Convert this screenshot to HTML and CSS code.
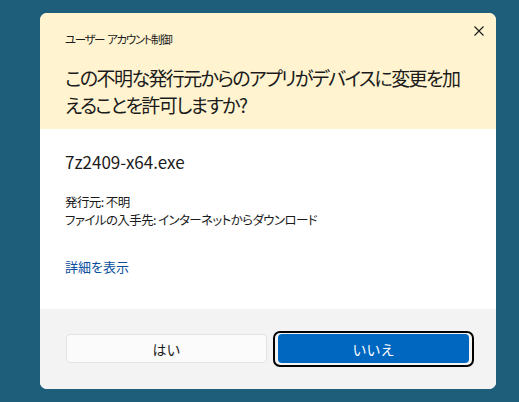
FILE: index.html
```html
<!DOCTYPE html>
<html lang="ja">
<head>
    <meta charset="UTF-8">
    <meta name="viewport" content="width=device-width, initial-scale=1.0">
    <title>ユーザー アカウント制御</title>
    <link rel="stylesheet" href="styles.css">
</head>
<body>

<div class="uac">
    <header class="uac-head">
        <div class="uac-titlebar">
            <span class="uac-caption">ユーザー アカウント制御</span>
            <button class="uac-close" aria-label="閉じる">
                <svg width="10" height="10" viewBox="0 0 10 10">
                    <path d="M0.5 0.5 L9.5 9.5 M9.5 0.5 L0.5 9.5" stroke="#1a1a1a" stroke-width="1.1" fill="none"/>
                </svg>
            </button>
        </div>
        <h1 class="uac-question">この不明な発行元からのアプリがデバイスに変更を加<br>えることを許可しますか?</h1>
    </header>

    <section class="uac-body">
        <p class="uac-file">7z2409-x64.exe</p>
        <p class="uac-info">発行元: 不明<br>ファイルの入手先: インターネットからダウンロード</p>
        <a class="uac-more" href="#">詳細を表示</a>
    </section>

    <!-- Buttons: "No" has focus by default -->
    <footer class="uac-actions">
        <button class="btn">はい</button>
        <button class="btn btn-primary">いいえ</button>
    </footer>
</div>

</body>
</html>
```

FILE: styles.css
```css
body {
    margin: 0;
    padding: 13px 0 0 40px;
    background-color: #1e5e7a;
    font-family: 'Noto Sans CJK JP', sans-serif;
    font-feature-settings: "palt";
    color: #1b1b1b;
    height: 100vh;
    box-sizing: border-box;
    overflow: hidden;
}

.uac {
    width: 456px;
    height: 376px;
    background: #fff;
    border-radius: 7px;
    overflow: hidden;
    display: flex;
    flex-direction: column;
}

.uac-head {
    background-color: #fff4cf;
    padding: 0 0 11px 25px;
}

.uac-titlebar {
    height: 51px;
    display: flex;
    justify-content: space-between;
    align-items: flex-start;
}

.uac-caption {
    margin-top: 18px;
    font-size: 11.5px;
    letter-spacing: -1.4px;
    word-spacing: 2px;
    line-height: 16px;
}

.uac-close {
    width: 30px;
    height: 30px;
    margin: 3px 2px 0 0;
    padding: 0;
    border: none;
    background: transparent;
    display: flex;
    justify-content: center;
    align-items: center;
}

.uac-question {
    margin: 0;
    font-size: 19px;
    letter-spacing: -1.6px;
    font-weight: normal;
    line-height: 27px;
    white-space: nowrap;
}

.uac-body {
    flex: 1;
    padding: 22px 25px 0 25px;
}

.uac-file {
    margin: 0;
    font-size: 17px;
    line-height: 22px;
}

.uac-info {
    margin: 20px 0 0 0;
    font-size: 12.5px;
    letter-spacing: -0.6px;
    line-height: 18px;
}

.uac-more {
    display: inline-block;
    margin-top: 29px;
    font-size: 13px;
    line-height: 18px;
    color: #0a4f9e;
    text-decoration: none;
}

.uac-actions {
    height: 80px;
    box-sizing: border-box;
    background-color: #f3f3f3;
    padding: 25px 22px 26px 26px;
    display: grid;
    grid-template-columns: 1fr 1fr;
    gap: 6px;
}

.btn {
    position: relative;
    height: 29px;
    border: 1px solid #e3e3e3;
    border-radius: 4px;
    background-color: #fbfbfb;
    font-family: inherit;
    font-size: 14px;
    color: #1b1b1b;
    padding: 0;
}

.btn-primary {
    margin: 0 5px;
    border: none;
    background-color: #0067c0;
    color: #fff;
}

.btn-primary::after {
    content: "";
    position: absolute;
    top: -3px;
    bottom: -4px;
    left: -5px;
    right: -5px;
    border: 2.5px solid #000;
    border-radius: 7px;
}
```
